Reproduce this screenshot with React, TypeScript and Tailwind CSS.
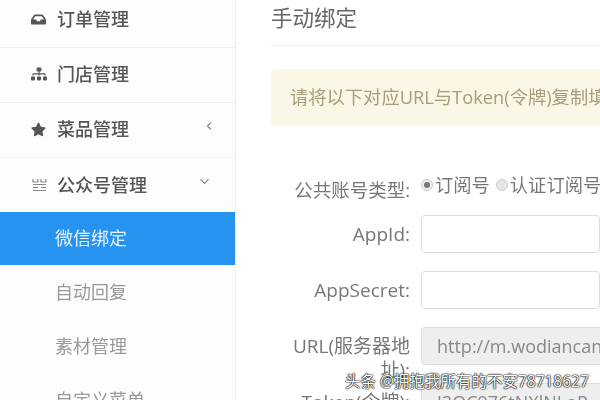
import { ChevronDown, ChevronLeft } from "lucide-react";
import { FaInbox, FaSitemap, FaStar } from "react-icons/fa";

const font = { fontFamily: '"Open Sans", "Noto Sans CJK SC", sans-serif' };

const menus = [
  { label: "订单管理", icon: <FaInbox className="text-[15px]" /> },
  { label: "门店管理", icon: <FaSitemap className="text-[16px]" /> },
  { label: "菜品管理", icon: <FaStar className="text-[15px]" />, arrow: <ChevronLeft size={12} strokeWidth={2.5} /> },
];

const subMenus = ["自动回复", "素材管理", "自定义菜单"];

const MpIcon = () => (
  <svg width="15" height="14" viewBox="0 0 15 14" fill="none" stroke="#888" strokeWidth="1.2">
    <path d="M1 1v3h5V1M9 1v3h5V1M1 6.500h13M1 9.500h5M9 9.500h5M1 12.500h13" />
  </svg>
);

const Field = ({ label, value, disabled }: { label: string; value?: string; disabled?: boolean }) => (
  <div className="flex h-[56px] shrink-0 items-start">
    <label className="ml-[19px] w-[120px] shrink-0 pt-[7px] text-right text-[19px] leading-[24px] text-[#777]">{label}</label>
    <div
      className={`ml-[11px] flex h-[38px] w-[400px] items-center rounded border border-[#ddd] px-[15px] text-[18px] text-[#888] ${disabled ? "bg-[#eee]" : "bg-white"}`}
    >
      {value}
    </div>
  </div>
);

export default function App() {
  return (
    <div className="relative flex h-[400px] w-[600px] overflow-hidden bg-white" style={font}>
      <aside className="flex w-[236px] shrink-0 flex-col overflow-hidden border-r border-[#eee] bg-[#fdfdfd] blur-[0.6px]">
        <div className="-mt-[7px]">
          {menus.map((m) => (
            <div key={m.label} className="flex h-[55px] items-center border-b border-[#f0f0f0] pb-[2px] pl-[31px] pr-[23px] text-[#555]">
              <span className="flex w-[26px] text-[#555]">{m.icon}</span>
              <span className="flex-1 text-[18px] font-medium">{m.label}</span>
              <span className="-mr-[3px] -mt-[6px] text-[#888]">{m.arrow}</span>
            </div>
          ))}
          <div className="flex h-[54px] items-center pl-[32px] pr-[23px] text-[#555]">
            <span className="flex w-[25px]"><MpIcon /></span>
            <span className="flex-1 text-[18px] font-medium">公众号管理</span>
            <span className="-mt-[8px] text-[#888]"><ChevronDown size={15} strokeWidth={2} /></span>
          </div>
        </div>
        <div className="flex h-[53px] shrink-0 items-center bg-[#2693f0] pl-[55px] text-[18px] text-[#e8f4ff]">微信绑定</div>
        {subMenus.map((s) => (
          <div key={s} className="flex h-[54px] shrink-0 items-center pl-[55px] text-[18px] text-[#999]">{s}</div>
        ))}
      </aside>
      <main className="flex min-w-0 flex-1 flex-col overflow-hidden pl-[35px] blur-[0.6px]">
        <div className="h-[46px] w-[600px] shrink-0 border-b border-[#eee] text-[21.500px] leading-[36px] text-[#666]">手动绑定</div>
        <div className="mt-[23px] flex h-[57px] w-[600px] shrink-0 items-center whitespace-nowrap rounded bg-[#fbf7e6] pb-[2px] pl-[19px] text-[18.300px] text-[#a89c7c]">
          请将以下对应URL与Token(令牌)复制填写到微信公众平台
        </div>
        <div className="mt-[48px] flex h-[41px] w-[600px] shrink-0 items-start">
          <label className="ml-[19px] w-[120px] shrink-0 whitespace-nowrap pt-[5px] text-right text-[18.500px] leading-[22px] text-[#777]">
            公共账号类型:
          </label>
          <div className="ml-[11px] flex items-center whitespace-nowrap text-[18.300px] leading-[22px] text-[#777]">
            <span className="mr-[2px] flex h-[12px] w-[12px] items-center justify-center rounded-full border border-[#ccc] bg-[#eee]">
              <span className="h-[6px] w-[6px] rounded-full bg-[#777]" />
            </span>
            订阅号
            <span className="ml-[6px] mr-[2px] h-[12px] w-[12px] rounded-full border border-[#ccc] bg-[#e5e5e5]" />
            认证订阅号
          </div>
        </div>
        <Field label="AppId:" />
        <Field label="AppSecret:" />
        <Field label="URL(服务器地址):" value="http://m.wodiancan.net/wechat" disabled />
        <Field label="Token(令牌):" value="J3OC976tNXlNLoP" disabled />
      </main>
      <div className="absolute bottom-[9px] left-[345px] whitespace-nowrap text-[15.500px] leading-[20px] text-white [text-shadow:0_0_2px_#000,0_0_1px_#000,0_0_1px_#000]">
        头条 @拥抱我所有的不安78718627
      </div>
    </div>
  );
}
